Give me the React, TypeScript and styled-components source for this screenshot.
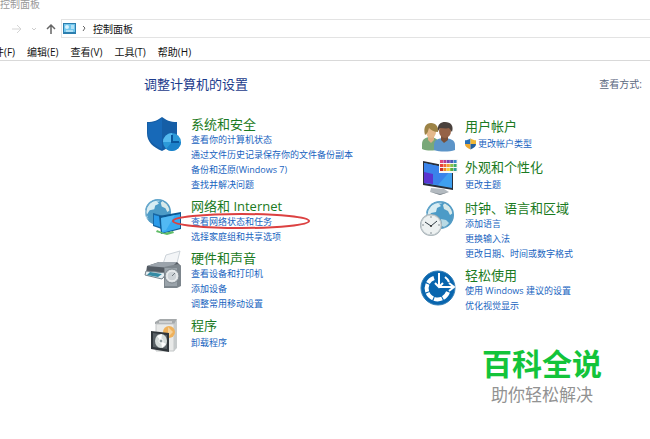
import React from "react";
import styled, { createGlobalStyle } from "styled-components";

const GlobalStyle = createGlobalStyle`
  * { box-sizing: border-box; }
  body {
    margin: 0;
    background: #fff;
    overflow-x: hidden;
    font-family: "Open Sans", "Noto Sans CJK SC", sans-serif;
  }
`;

const Window = styled.div`
  min-height: 100vh;
  display: flex;
  flex-direction: column;
`;

const TitleBar = styled.header`
  height: 9px;
  font-size: 10px;
  line-height: 8px;
  color: #999;
`;

const AddressRow = styled.nav`
  display: flex;
  align-items: center;
  margin-top: 10px;
  height: 19px;
`;

const NavButtons = styled.div`
  display: flex;
  align-items: center;
  justify-content: flex-end;
  width: 61px;
  padding-right: 5px;
`;

const NavButton = styled.button<{ $wide?: boolean }>`
  border: 0;
  padding: 0;
  background: none;
  width: ${(p) => (p.$wide ? 14 : 10)}px;
  height: 16px;
  margin-left: 5px;
  display: flex;
  align-items: center;
  justify-content: center;
`;

const AddressBox = styled.div`
  flex: 1;
  height: 19px;
  display: flex;
  align-items: center;
  gap: 6px;
  padding-left: 1px;
  border: 1px solid #e3e3e3;
  border-right: 0;
`;

const Crumb = styled.a`
  font-size: 10px;
  line-height: 16px;
  color: #111;
  text-decoration: none;
`;

const MenuBar = styled.nav`
  display: flex;
  align-items: center;
  gap: 12px;
  height: 23px;
  padding-top: 5px;
  margin-left: -16px;
  border-bottom: 1px solid #d9d9d9;
`;

const MenuButton = styled.button`
  border: 0;
  padding: 0;
  background: none;
  font-family: inherit;
  font-size: 10px;
  line-height: 14px;
  color: #111;
  white-space: nowrap;
`;

const Main = styled.main`
  flex: 1;
  display: flex;
  flex-direction: column;
  padding: 13px 8px 0 144px;
`;

const PageHead = styled.div`
  display: flex;
  align-items: center;
  justify-content: space-between;
  height: 20px;
`;

const PageTitle = styled.h1`
  margin: 0;
  font-size: 13px;
  line-height: 20px;
  font-weight: 400;
  color: #1c3b8c;
`;

const ViewBy = styled.span`
  font-size: 10px;
  line-height: 20px;
  color: #5b6780;
`;

const Columns = styled.div`
  flex: 1;
  display: grid;
  grid-template-columns: 276fr 222fr;
  margin-top: 22px;
`;

const Column = styled.div<{ $top: number }>`
  display: flex;
  flex-direction: column;
  gap: 6px;
  padding-top: ${(p) => p.$top}px;
`;

const CategoryRow = styled.section<{ $text: number }>`
  display: grid;
  grid-template-columns: ${(p) => p.$text}px 1fr;
  min-height: 35px;
`;

const IconSlot = styled.div`
  height: 0;
  overflow: visible;
  svg { display: block; }
`;

const CategoryTitle = styled.h2<{ $spaced: boolean }>`
  margin: 0 0 ${(p) => (p.$spaced ? 2 : 0)}px;
  font-size: 13px;
  line-height: 16px;
  font-weight: 400;
  color: #1a7a22;
  white-space: nowrap;
`;

const LinkList = styled.ul`
  list-style: none;
  margin: 0;
  padding: 0;
`;

const LinkItem = styled.li`
  position: relative;
  display: flex;
  align-items: center;
  gap: 2px;
  height: 15px;
`;

const TaskLink = styled.a`
  font-size: 9px;
  line-height: 15px;
  color: #1763c0;
  text-decoration: none;
  white-space: nowrap;
`;

const Ring = styled.svg`
  position: absolute;
  left: -20px;
  top: -2px;
  width: 141px;
  height: 18px;
  pointer-events: none;
`;

const Brand = styled.footer`
  align-self: flex-end;
  display: flex;
  flex-direction: column;
  align-items: center;
  margin: auto 40px 34px 0;
`;

const BrandName = styled.strong`
  font-size: 30px;
  line-height: 42px;
  font-weight: 700;
  color: #13c43a;
`;

const BrandTag = styled.span`
  font-size: 17px;
  line-height: 20px;
  color: #929292;
`;

const ShieldIcon = () => (
  <svg width="38" height="37" viewBox="0 0 38 37" aria-hidden="true">
    <path d="M3 6C10 6 14 4 18 1c4 3 8 5 15 5v12c0 8-7 13-15 17C9 31 3 26 3 17z" fill="#155ea6" />
    <path d="M4 7c7 0 10-2 14-5v31C10 29 4 24 4 17z" fill="#1769b8" />
    <circle cx="28" cy="26" r="9" fill="#2c9ad9" />
    <path d="M28 26V17a9 9 0 0 0-9 9z" fill="#55b9ee" />
    <path d="M28 26h9a9 9 0 0 1-9 9 9 9 0 0 1-6-2z" fill="#1b82ca" />
    <path d="M28 19v7h7" stroke="#09579d" strokeWidth="2" fill="none" />
  </svg>
);

const Globe = ({ x, y, r }: { x: number; y: number; r: number }) => (
  <g transform={`translate(${x} ${y}) scale(${r / 14})`}>
    <circle r="14" fill="#4c9bc7" />
    <path d="M-13-3A14 14 0 0 1 4-13C-2-9-7-8-9-2z" fill="#9bcde6" />
    <path d="M-8-10l6-2 3 3-4 2-1 4-5 1-3 5 2 5-3-2-1-7z" fill="#d9edf3" />
    <path d="M5-12l5 4 3 6-3 2-2-4-4-2-1-4z" fill="#d7e9ea" />
    <path d="M1 4l5 1 3 3-4 5-3-2z" fill="#b8dae5" />
    <circle r="13" fill="none" stroke="#5a9cc2" />
  </g>
);

const NetworkIcon = () => (
  <svg width="38" height="37" viewBox="0 0 38 37" aria-hidden="true">
    <Globe x={14} y={14} r={13} />
    <path d="M9 15l17 5v14L9 28z" fill="#1767a5" />
    <path d="M10 17l15 4v11l-15-5z" fill="#2a9bea" />
    <path d="M15 18l22-4v17l-20 5z" fill="#0e5994" />
    <path d="M17 20l19-4v14l-18 5z" fill="#36aaf1" />
    <path d="M17 20l14-3-9 15-4 1z" fill="#62c2f6" opacity=".65" />
    <path d="M13 32l7 3 9-2 1 2-7 2-11-3z" fill="#62bd68" />
  </svg>
);

const PrinterIcon = () => (
  <svg width="38" height="40" viewBox="0 0 38 40" aria-hidden="true">
    <path d="M22 5l14-4-4 16H18z" fill="#f3f5f7" stroke="#ccd3d9" />
    <path d="M3 16l12-4h18l4 4v12l-10 2L2 23z" fill="#545b63" />
    <path d="M3 16l12-4h18l-6 6z" fill="#9ba3ab" />
    <path d="M2 21l21 2-5 6L1 25z" fill="#e7f0f4" stroke="#73818a" />
    <path d="M6 22l12 2-4 3-11-2z" fill="#358ba4" />
    <path d="M20 17l14-3 3 2v20l-4 2H20z" fill="#7d868d" />
    <path d="M21 18h12v18H21z" fill="#9aa3aa" />
    <circle cx="28" cy="26" r="7" fill="#d9dee1" stroke="#7b848b" />
    <circle cx="28" cy="26" r="5" fill="#ccd2d6" stroke="#f1f3f4" />
    <path d="M28 26l3-3" stroke="#6f787e" />
  </svg>
);

const ProgramsIcon = () => (
  <svg width="38" height="37" viewBox="0 0 38 37" aria-hidden="true">
    <path d="M11 5l5-3h17l-2 5H11z" fill="#a5a9ab" />
    <path d="M12 7h18v27H12z" fill="#e8e9e8" stroke="#c4c7c8" />
    <path d="M30 7l3-5v29l-3 3z" fill="#c6cacb" />
    <path d="M15 5h13" stroke="#f8f8f8" />
    <circle cx="25" cy="15" r="6" fill="#efb15b" />
    <path d="M24 10l5 5-5 5z" fill="#f6d199" />
    <path d="M7 14l18 2v19L7 32z" fill="#30363b" />
    <path d="M9 16l14 2v14L9 30z" fill="#596166" />
    <ellipse cx="17" cy="24" rx="6" ry="7" fill="#d5dcda" />
    <path d="M17 24l-4-5 5-2zm0 0l5 3-4 4z" fill="#fff" />
    <circle cx="17" cy="24" r="2" fill="#8d9a9d" stroke="#fff" />
  </svg>
);

const UsersIcon = () => (
  <svg width="38" height="34" viewBox="0 0 38 34" aria-hidden="true">
    <path d="M2 31v-5c0-5 4-7 8-7s9 2 9 7v5c-5 2-12 2-17 0z" fill="#79a879" />
    <path d="M8 18h6v4l-3 3-3-3z" fill="#dcae83" />
    <ellipse cx="11" cy="14" rx="5" ry="6" fill="#e4b98c" />
    <path d="M5 17c-2-8 1-12 6-12s8 4 7 9c-4 0-7-2-9-4-1 3-1 5-4 7z" fill="#9c8346" />
    <path d="M14 32v-5c0-5 4-7 10-7s11 2 11 7v5c-6 2-15 2-21 0z" fill="#5c94c8" />
    <path d="M21 18h7v4l-4 3-3-3z" fill="#77503a" />
    <ellipse cx="25" cy="13" rx="6" ry="7" fill="#956246" />
    <path d="M18 13c-1-7 3-9 7-9 6 0 9 4 7 10l-3-4c-3 1-6 0-9 0z" fill="#4a413c" />
  </svg>
);

const swatches = [
  "#e0487c", "#b83a94", "#7a3fae", "#4c55b8", "#3a86c8",
  "#e9423b", "#ef6a35", "#f2a032", "#8cc04a", "#3fae6a",
  "#c9302c", "#f08a24", "#f6cf3c", "#5fae3e", "#2f9c94",
];

const MonitorIcon = () => (
  <svg width="38" height="38" viewBox="0 0 38 38" aria-hidden="true">
    <path d="M11 29l13 1 5 3-9 3-10-3z" fill="#b3bac0" />
    <path d="M11 33l9 2 9-2-9 3z" fill="#7f878e" />
    <path d="M3 2l30 6v23L3 26z" fill="#2a2f3a" />
    <path d="M4 4l28 6v19L4 24z" fill="#3fa0f0" />
    <path d="M4 4l28 6L18 26 4 24z" fill="#3a83ea" />
    <path d="M4 13l9 2v10l-9-1z" fill="#5a35d0" />
    <path d="M19 0h19v14H19z" fill="#f7f7f7" />
    {swatches.map((c, i) => (
      <rect
        key={c}
        x={20 + (i % 5) * 3.4}
        y={1 + Math.floor(i / 5) * 4}
        width="3"
        height="3"
        fill={c}
      />
    ))}
  </svg>
);

const ClockIcon = () => (
  <svg width="38" height="38" viewBox="0 0 38 38" aria-hidden="true">
    <Globe x={20} y={15} r={14} />
    <circle cx="11" cy="25" r="11" fill="#a1adb2" />
    <circle cx="11" cy="25" r="10" fill="#edf1f1" stroke="#c5cdd0" />
    <path d="M11 16v2m0 14v2M2 25h2m14 0h2" stroke="#879197" />
    <path d="M5 22l6 4 6-5" fill="none" stroke="#333f46" />
    <circle cx="11" cy="26" r="1" fill="#333" />
  </svg>
);

const EaseIcon = () => (
  <svg width="38" height="40" viewBox="0 0 38 40" aria-hidden="true">
    <circle cx="18" cy="21" r="17" fill="#0865ae" stroke="#347fb7" />
    <path d="M14 11a11 11 0 1 0 14 14" fill="none" stroke="#fff" strokeWidth="4" strokeDasharray="8 1" />
    <path d="M19 6v14m-4-4l4 4 4-4M19 20h15m-5-4l5 4-5 4" fill="none" stroke="#fff" strokeWidth="2" />
    <path d="M25 10a13 13 0 0 1 4 5" fill="none" stroke="#fff" strokeWidth="2" />
  </svg>
);

const UacShield = () => (
  <svg width="11" height="12" viewBox="0 0 12 12" aria-hidden="true">
    <path d="M0 2c2 0 4-1 6-2v6H0z" fill="#2a70b5" />
    <path d="M6 0c2 1 4 2 6 2v4H6z" fill="#f1b735" />
    <path d="M0 6h6v6C2 10 0 9 0 6z" fill="#eda932" />
    <path d="M6 6h6c0 3-2 4-6 6z" fill="#245f9d" />
  </svg>
);

type Category = {
  title: string;
  icon: React.ReactNode;
  links: { text: string; ringed?: boolean; shield?: boolean }[];
};

const leftCategories: Category[] = [
  {
    title: "系统和安全",
    icon: <ShieldIcon />,
    links: [
      { text: "查看你的计算机状态" },
      { text: "通过文件历史记录保存你的文件备份副本" },
      { text: "备份和还原(Windows 7)" },
      { text: "查找并解决问题" },
    ],
  },
  {
    title: "网络和 Internet",
    icon: <NetworkIcon />,
    links: [{ text: "查看网络状态和任务", ringed: true }, { text: "选择家庭组和共享选项" }],
  },
  {
    title: "硬件和声音",
    icon: <PrinterIcon />,
    links: [{ text: "查看设备和打印机" }, { text: "添加设备" }, { text: "调整常用移动设置" }],
  },
  { title: "程序", icon: <ProgramsIcon />, links: [{ text: "卸载程序" }] },
];

const rightCategories: Category[] = [
  { title: "用户帐户", icon: <UsersIcon />, links: [{ text: "更改帐户类型", shield: true }] },
  { title: "外观和个性化", icon: <MonitorIcon />, links: [{ text: "更改主题" }] },
  {
    title: "时钟、语言和区域",
    icon: <ClockIcon />,
    links: [{ text: "添加语言" }, { text: "更换输入法" }, { text: "更改日期、时间或数字格式" }],
  },
  {
    title: "轻松使用",
    icon: <EaseIcon />,
    links: [{ text: "使用 Windows 建议的设置" }, { text: "优化视觉显示" }],
  },
];

const CategoryView = ({ item, text }: { item: Category; text: number }) => (
  <CategoryRow $text={text}>
    <IconSlot>{item.icon}</IconSlot>
    <div>
      <CategoryTitle $spaced={item.links.length === 1}>{item.title}</CategoryTitle>
      <LinkList>
        {item.links.map((l) => (
          <LinkItem key={l.text}>
            {l.shield && <UacShield />}
            <TaskLink href="#">{l.text}</TaskLink>
            {l.ringed && (
              <Ring viewBox="0 0 141 18" aria-hidden="true">
                <ellipse cx="70" cy="9" rx="68" ry="7" fill="none" stroke="#dc4141" strokeWidth="2" />
              </Ring>
            )}
          </LinkItem>
        ))}
      </LinkList>
    </div>
  </CategoryRow>
);

export default function App() {
  return (
    <Window>
      <GlobalStyle />
      <TitleBar>控制面板</TitleBar>
      <AddressRow aria-label="地址">
        <NavButtons>
          <NavButton aria-label="前进">
            <svg width="10" height="10" viewBox="0 0 10 10" fill="none" stroke="#d5d5d5">
              <path d="M0 5h9M5 1l4 4-4 4" />
            </svg>
          </NavButton>
          <NavButton $wide aria-label="最近位置">
            <svg width="6" height="6" viewBox="0 0 6 6" fill="none" stroke="#ccc">
              <path d="M1 2l2 2 2-2" />
            </svg>
          </NavButton>
          <NavButton aria-label="向上">
            <svg width="10" height="12" viewBox="0 0 10 12" fill="none" stroke="#666" strokeWidth="1.5">
              <path d="M5 11V2M1 6l4-4 4 4" />
            </svg>
          </NavButton>
        </NavButtons>
        <AddressBox>
          <svg width="13" height="11" viewBox="0 0 13 11" aria-hidden="true">
            <path d="M0 0h13v11H0z" fill="#2c7eae" />
            <path d="M1 1h11v8H1z" fill="#72c6ec" />
            <circle cx="4" cy="4" r="2" fill="#d9f3ff" />
            <path d="M8 3h3M8 5h3M3 8h7" stroke="#f0fbff" />
          </svg>
          <svg width="5" height="7" viewBox="0 0 5 7" fill="none" stroke="#666" aria-hidden="true">
            <path d="M1 1l2 2-2 3" />
          </svg>
          <Crumb href="#">控制面板</Crumb>
        </AddressBox>
      </AddressRow>
      <MenuBar aria-label="菜单">
        {["文件(F)", "编辑(E)", "查看(V)", "工具(T)", "帮助(H)"].map((m) => (
          <MenuButton key={m}>{m}</MenuButton>
        ))}
      </MenuBar>
      <Main>
        <PageHead>
          <PageTitle>调整计算机的设置</PageTitle>
          <ViewBy>查看方式:</ViewBy>
        </PageHead>
        <Columns>
          <Column $top={0}>
            {leftCategories.map((c) => (
              <CategoryView key={c.title} item={c} text={47} />
            ))}
          </Column>
          <Column $top={2}>
            {rightCategories.map((c) => (
              <CategoryView key={c.title} item={c} text={45} />
            ))}
            <Brand>
              <BrandName>百科全说</BrandName>
              <BrandTag>助你轻松解决</BrandTag>
            </Brand>
          </Column>
        </Columns>
      </Main>
    </Window>
  );
}
